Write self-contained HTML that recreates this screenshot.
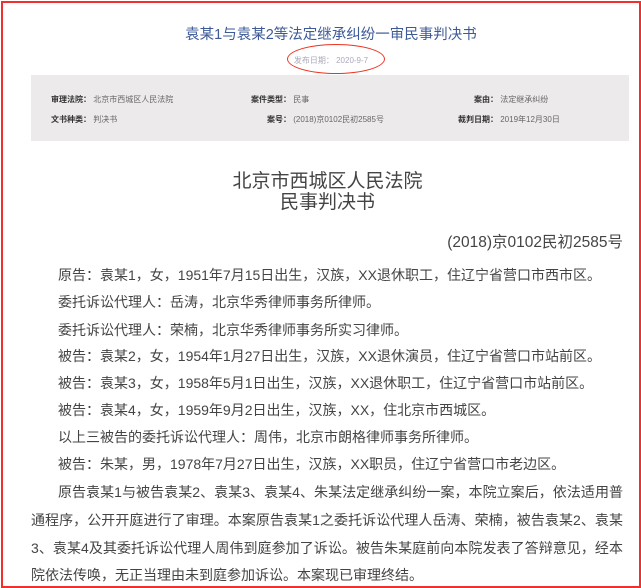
<!DOCTYPE html>
<html><head><meta charset="utf-8"><style>
html,body{margin:0;padding:0;background:#fff;}
body{width:641px;height:588px;overflow:hidden;position:relative;font-family:"Liberation Sans","Noto Sans CJK SC",sans-serif;}
.frame{position:absolute;left:1px;top:1px;width:636px;height:583px;border:2px solid #f0302c;}
.title{position:absolute;left:0;width:662px;top:23px;text-align:center;font-size:14.5px;color:#3d5a98;}
.date{position:absolute;left:0;width:662px;top:55px;text-align:center;font-size:8px;color:#aab;}
.oval{position:absolute;left:287px;top:44px;width:96px;height:28px;border:1.5px solid #e32;border-radius:50%;}
.box{position:absolute;left:31px;top:75px;width:598px;height:66px;background:#edeaeb;font-size:8px;color:#666;}
.box span{position:absolute;white-space:nowrap;}
.box b{color:#333;}
.h{position:absolute;left:0;width:655px;text-align:center;font-size:19px;color:#444;}
.p{position:absolute;left:58px;font-size:14px;color:#444;white-space:nowrap;}
.l{position:absolute;left:31px;width:592px;font-size:14px;color:#444;white-space:nowrap;text-align:justify;text-align-last:justify;}
</style></head><body>
<div class="frame"></div>
<div class="title">袁某1与袁某2等法定继承纠纷一审民事判决书</div>
<div class="oval"></div>
<div class="date">发布日期： 2020-9-7</div>
<div class="box">
<span style="left:20px;top:19px"><b>审理法院：</b> 北京市西城区人民法院</span>
<span style="left:220px;top:19px"><b>案件类型：</b> 民事</span>
<span style="left:443px;top:19px"><b>案由：</b> 法定继承纠纷</span>
<span style="left:20px;top:39px"><b>文书种类：</b> 判决书</span>
<span style="left:236px;top:39px"><b>案号：</b> (2018)京0102民初2585号</span>
<span style="left:427px;top:39px"><b>裁判日期：</b> 2019年12月30日</span>
</div>
<div class="h" style="top:166px">北京市西城区人民法院</div>
<div class="h" style="top:187px">民事判决书</div>
<div class="p" style="top:230px;left:auto;right:18px;font-size:15.5px">(2018)京0102民初2585号</div>
<div class="p" style="top:265px">原告：袁某1，女，1951年7月15日出生，汉族，XX退休职工，住辽宁省营口市西市区。</div>
<div class="p" style="top:292px">委托诉讼代理人：岳涛，北京华秀律师事务所律师。</div>
<div class="p" style="top:320px">委托诉讼代理人：荣楠，北京华秀律师事务所实习律师。</div>
<div class="p" style="top:346px">被告：袁某2，女，1954年1月27日出生，汉族，XX退休演员，住辽宁省营口市站前区。</div>
<div class="p" style="top:373px">被告：袁某3，女，1958年5月1日出生，汉族，XX退休职工，住辽宁省营口市站前区。</div>
<div class="p" style="top:400px">被告：袁某4，女，1959年9月2日出生，汉族，XX，住北京市西城区。</div>
<div class="p" style="top:427px">以上三被告的委托诉讼代理人：周伟，北京市朗格律师事务所律师。</div>
<div class="p" style="top:454px">被告：朱某，男，1978年7月27日出生，汉族，XX职员，住辽宁省营口市老边区。</div>
<div class="l" style="top:482px;left:58px;width:565px">原告袁某1与被告袁某2、袁某3、袁某4、朱某法定继承纠纷一案，本院立案后，依法适用普</div>
<div class="l" style="top:510px">通程序，公开开庭进行了审理。本案原告袁某1之委托诉讼代理人岳涛、荣楠，被告袁某2、袁某</div>
<div class="l" style="top:538px">3、袁某4及其委托诉讼代理人周伟到庭参加了诉讼。被告朱某庭前向本院发表了答辩意见，经本</div>
<div class="p" style="top:565px;left:31px">院依法传唤，无正当理由未到庭参加诉讼。本案现已审理终结。</div>
</body></html>
